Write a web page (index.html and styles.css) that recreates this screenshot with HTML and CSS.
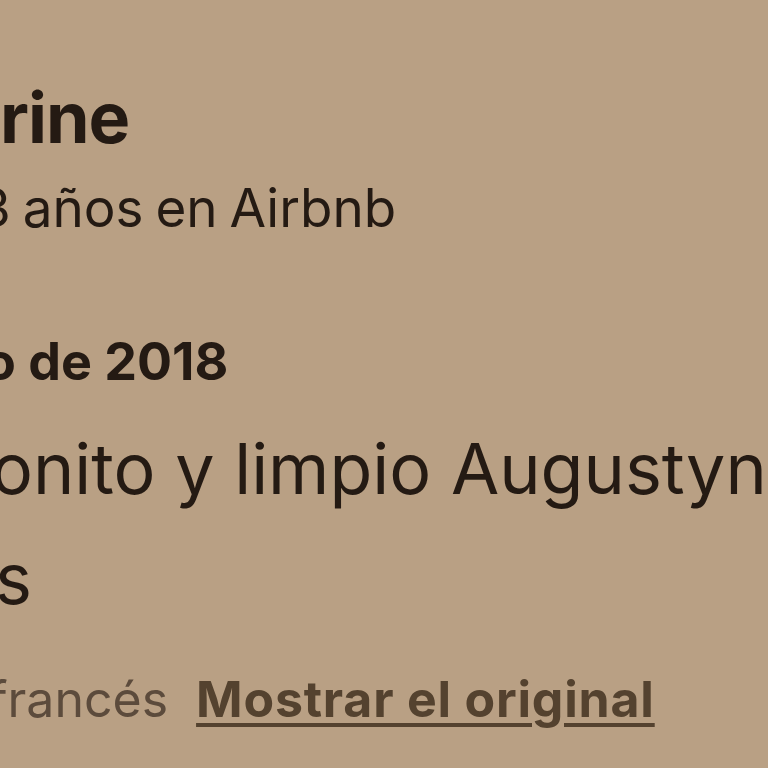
FILE: index.html
```html
<!DOCTYPE html>
<html lang="es">
<head>
<meta charset="utf-8">
<link rel="stylesheet" href="styles.css">
</head>
<body>
<main class="review">
  <header class="author">
    <h1 class="name">rine</h1>
    <p class="tenure">3 años en Airbnb</p>
  </header>
  <p class="date">o de 2018</p>
  <div class="body">
    <p class="line first">onito y limpio Augustyn</p>
    <p class="line second">s</p>
  </div>
  <p class="translate"><span class="lang">francés</span><a class="original" href="#">Mostrar el original</a></p>
</main>
</body>
</html>
```
FILE: styles.css
```css
html, body {
  margin: 0;
  padding: 0;
  background: #b9a084;
}
body {
  width: 768px;
  height: 768px;
  overflow: hidden;
  font-family: Inter, "Noto Sans", sans-serif;
  color: #241a13;
}
.review {
  display: flex;
  flex-direction: column;
  white-space: nowrap;
}
.author { display: flex; flex-direction: column; }
.name {
  margin: 0;
  padding-top: 78px;
  font-size: 70px;
  line-height: 80px;
  font-weight: 700;
  letter-spacing: -1px;
}
.tenure {
  margin: 0;
  margin-top: 8px;
  font-size: 53px;
  line-height: 84px;
  text-indent: -22px;
  word-spacing: -3px;
}
.date {
  margin: 0;
  margin-top: 70px;
  font-size: 52px;
  line-height: 84px;
  font-weight: 700;
  text-indent: -16px;
}
.body { display: flex; flex-direction: column; }
.line {
  margin: 0;
  font-size: 70px;
  line-height: 110px;
}
.first { text-indent: -9px; margin-top: 10px; }
.second { text-indent: -5px; }
.translate {
  margin: 0;
  margin-top: 10px;
  font-size: 50px;
  line-height: 110px;
  color: #5c4b3c;
  text-indent: -11px;
}
.lang { margin-right: 28px; }
.original {
  color: #54422f;
  font-weight: 700;
  letter-spacing: 0.8px;
  text-decoration: underline;
  text-decoration-thickness: 4px;
  text-underline-offset: 6px;
}
```
